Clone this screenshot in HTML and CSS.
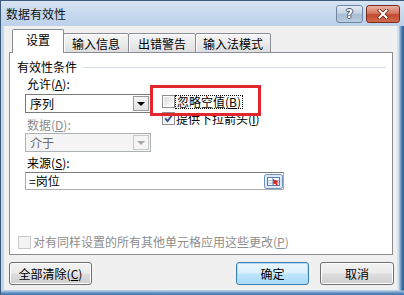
FILE: index.html
```html
<!DOCTYPE html>
<html lang="zh-CN">
<head>
<meta charset="utf-8">
<title>数据有效性</title>
<link rel="stylesheet" href="styles.css">
</head>
<body>
<div class="window">
  <div class="titlebar">
    <span class="title">数据有效性</span>
    <div class="caption-btns">
      <div class="cbtn help"><span>?</span></div>
      <div class="cbtn close">
        <svg width="12" height="10" viewBox="0 0 12 10"><path d="M2.5 1.5 L9.5 8.5 M9.5 1.5 L2.5 8.5" stroke="#6b2414" stroke-width="3.6" stroke-linecap="square"/><path d="M2.5 1.5 L9.5 8.5 M9.5 1.5 L2.5 8.5" stroke="#fff" stroke-width="2" stroke-linecap="square"/></svg>
      </div>
    </div>
  </div>
  <div class="client">
    <div class="tabs">
      <div class="tab active">设置</div>
      <div class="tab w1">输入信息</div>
      <div class="tab w2">出错警告</div>
      <div class="tab w3">输入法模式</div>
    </div>
    <div class="panel">
      <div class="group-title"><span>有效性条件</span><i class="rule"></i></div>
      <div class="cond">
        <div class="left">
          <div class="label">允许(<u>A</u>):</div>
          <div class="select"><span>序列</span><span class="drop"><i class="tri"></i></span></div>
          <div class="label gap disabled">数据(<u>D</u>):</div>
          <div class="select disabled"><span>介于</span><span class="drop"><i class="tri"></i></span></div>
        </div>
        <div class="right">
          <div class="check"><span class="box"></span><span class="focus">忽略空值(<u>B</u>)</span></div>
          <div class="check"><span class="box"><svg width="9" height="9" viewBox="0 0 9 9"><path d="M1.2 4.4 L3.6 7 L7.8 1.4" fill="none" stroke="#3d5596" stroke-width="1.9"/></svg></span><span class="ctext">提供下拉箭头(<u>I</u>)</span></div>
        </div>
      </div>
      <div class="source">
        <div class="label">来源(<u>S</u>):</div>
        <div class="input"><span>=岗位</span>
          <span class="rangebtn"><svg width="19" height="15" viewBox="0 0 19 15"><rect x="0.5" y="0.5" width="18" height="14" rx="2" fill="#dfe9f5" stroke="#6f90bb"/><rect x="3.5" y="3.5" width="12" height="8" fill="#fff" stroke="#5a7fae"/><path d="M4 6.5 H15 M4 9 H15 M8.5 4 V11" stroke="#9db4d2" stroke-width="1"/><path d="M9 5 L15 8 L12.5 8.8 L14 11 L12.6 11.8 L11.2 9.6 L9.4 11 Z" fill="#d8221e"/></svg></span>
        </div>
      </div>
      <div class="check bottom disabled"><span class="box"></span><span class="ctext">对有同样设置的所有其他单元格应用这些更改(<u>P</u>)</span></div>
    </div>
    <div class="buttons">
      <div class="btn clear">全部清除(<u>C</u>)</div>
      <div class="spacer"></div>
      <div class="btn ok">确定</div>
      <div class="btn cancel">取消</div>
    </div>
  </div>
  <div class="annot"></div>
</div>
</body>
</html>
```
FILE: styles.css
```css
* { box-sizing: border-box; margin: 0; padding: 0; }
body {
  margin: 0;
  width: 404px;
  height: 295px;
  overflow: hidden;
  background: #fff;
  font-family: "Noto Sans CJK SC", "Noto Sans", sans-serif;
  font-size: 12px;
  color: #000;
}
u { text-decoration: underline; text-underline-offset: 1px; }

.window {
  position: relative;
  width: 404px;
  height: 295px;
  display: flex;
  flex-direction: column;
  border-left: 1px solid #3e5a7a;
  border-top: 1px solid #3e5a7a;
  background:
    linear-gradient(to bottom, rgba(0,0,0,0) 289px, #a9c4e0 290px, #5f8fc0 292px, #2f66a0 295px),
    linear-gradient(to right, #c2d6eb 0, #c9dbee 396px, #e3ecf5 397px, #8fb2d6 399px, #3a70a8 401px, #2b5f96 404px);
}

.titlebar {
  height: 25px;
  display: flex;
  align-items: center;
  padding-left: 5px;
  background: linear-gradient(to bottom, #d6e4f3 0, #c6d9ee 50%, #bcd2ea 100%);
}
.title { line-height: 14px; margin-top: 1px; color: #111; }
.caption-btns {
  margin-left: auto;
  display: flex;
  gap: 3px;
  margin-right: 4px;
  margin-top: 1px;
}
.cbtn {
  height: 18px;
  border-radius: 3px;
  display: flex;
  align-items: center;
  justify-content: center;
}
.help {
  width: 27px;
  border: 1px solid #6f86a3;
  background: linear-gradient(to bottom, #e3ebf4 0, #c3d2e2 45%, #a8bcd3 55%, #b9cce0 100%);
}
.help span {
  color: #fff;
  font-family: "DejaVu Sans", sans-serif;
  font-weight: bold;
  font-size: 12px;
  line-height: 12px;
  text-shadow: 0 0 1px #3b4f68, 1px 0 0 #4a5f7a, -1px 0 0 #4a5f7a, 0 1px 0 #4a5f7a, 0 -1px 0 #4a5f7a;
}
.close {
  width: 34px;
  border: 1px solid #7b2c20;
  background: linear-gradient(to bottom, #eab3a3 0, #d6755f 45%, #c24b30 55%, #d06a4c 100%);
}

.client {
  flex: 1;
  margin: 0 7px 5px 3px;
  background: #f0f0f0;
  display: flex;
  flex-direction: column;
  padding-top: 3px;
}

.tabs {
  display: flex;
  align-items: flex-end;
  height: 24px;
  margin-left: 8px;
  margin-bottom: -1px;
  position: relative;
  z-index: 1;
}
.tab {
  height: 20px;
  margin-left: -1px;
  border: 1px solid #898c95;
  border-radius: 2px 2px 0 0;
  background: linear-gradient(to bottom, #f4f4f4 0, #ececec 50%, #dedede 100%);
  box-shadow: inset 1px 1px 0 #fff;
  display: flex;
  align-items: center;
  justify-content: center;
  line-height: 14px;
  padding-top: 1px;
}
.tab.active {
  margin-left: 0;
  width: 52px;
  height: 24px;
  background: #fff;
  border-bottom: none;
  box-shadow: none;
  position: relative;
  z-index: 2;
  padding-top: 0;
  padding-bottom: 3px;
}
.tab.w1 { width: 66px; }
.tab.w2 { width: 68px; }
.tab.w3 { width: 76px; }

.panel {
  height: 203px;
  margin: 0 4px 0 5px;
  border: 1px solid #898c95;
  background: #fff;
  display: flex;
  flex-direction: column;
  padding: 7px 6px 5px 7px;
}
.group-title {
  display: flex;
  align-items: center;
  height: 14px;
  line-height: 14px;
}
.rule {
  flex: 1;
  height: 1px;
  margin-left: 6px;
  background: #d5dfe5;
}

.cond {
  display: flex;
  padding-left: 8px;
  margin-top: 3px;
}
.left { width: 126px; display: flex; flex-direction: column; }
.label { height: 14px; line-height: 14px; padding-left: 2px; }
.label.gap { margin-top: 5px; }
.disabled { color: #8d8d8d; }

.select {
  margin-top: 3px;
  height: 19px;
  border: 1px solid #7a7a7a;
  background: #fff;
  display: flex;
  align-items: center;
  justify-content: space-between;
  padding: 0 1px 0 4px;
  line-height: 14px;
}
.select.disabled {
  margin-top: 1px;
  background: #f4f4f4;
  border-color: #adb2b5;
  color: #6d6d6d;
}
.drop {
  width: 16px;
  height: 15px;
  border: 1px solid #9a9a9a;
  background: linear-gradient(to bottom, #f6f6f6 0, #e2e2e2 100%);
  display: flex;
  align-items: center;
  justify-content: center;
}
.select.disabled .drop { border-color: #c8c8c8; background: #f4f4f4; }
.tri {
  width: 0; height: 0;
  border-left: 4px solid transparent;
  border-right: 4px solid transparent;
  border-top: 4px solid #000;
}
.select.disabled .tri { border-top-color: #a8a8a8; }

.right {
  margin-left: 11px;
  padding-top: 16px;
  display: flex;
  flex-direction: column;
}
.check {
  display: flex;
  align-items: center;
  height: 17px;
  line-height: 14px;
}
.box {
  width: 13px;
  height: 13px;
  border: 1px solid #8f8f8f;
  background: linear-gradient(135deg, #dadada 0, #f4f4f4 70%, #ffffff 100%);
  box-shadow: inset 0 0 0 1px #fff;
  display: flex;
  align-items: center;
  justify-content: center;
  flex: none;
}
.focus {
  border: 1px dotted #000;
  padding: 0 1px;
  line-height: 12px;
  height: 14px;
}
.ctext { margin-left: 1px; }

.source { padding-left: 8px; margin-top: 4px; }
.input {
  margin-top: 2px;
  width: 259px;
  height: 18px;
  border: 1px solid #abadb3;
  border-top-color: #7a7a7a;
  background: #fff;
  display: flex;
  align-items: center;
  justify-content: space-between;
  padding: 0 0 0 3px;
  line-height: 14px;
}
.rangebtn { display: flex; width: 19px; height: 15px; margin-right: 0; }

.check.bottom {
  margin-top: auto;
  height: 14px;
  padding-left: 1px;
}
.check.bottom .box { border-color: #c9c9c9; background: #f4f4f4; box-shadow: none; }
.check.bottom .ctext { margin-left: 2px; }

.buttons {
  display: flex;
  margin-top: 7px;
  padding: 0 3px 0 5px;
  gap: 11px;
}
.spacer { flex: 1; }
.btn {
  height: 23px;
  border: 1px solid #707070;
  border-radius: 3px;
  background: linear-gradient(to bottom, #f2f2f2 0, #ebebeb 48%, #dddddd 52%, #cfcfcf 100%);
  box-shadow: inset 0 0 0 1px #fcfcfc;
  display: flex;
  align-items: center;
  justify-content: center;
  line-height: 14px;
}
.clear { width: 83px; }
.ok {
  width: 73px;
  border-color: #3c7fb1;
  box-shadow: inset 0 0 0 1px #b0dcf5;
  background: linear-gradient(to bottom, #eaf6fd 0, #d9f0fc 48%, #bee6fd 52%, #a7d9f5 100%);
}
.cancel { width: 74px; }

.annot {
  position: absolute;
  left: 149px;
  top: 84px;
  width: 111px;
  height: 31px;
  border: 3px solid #e3262b;
}
```
